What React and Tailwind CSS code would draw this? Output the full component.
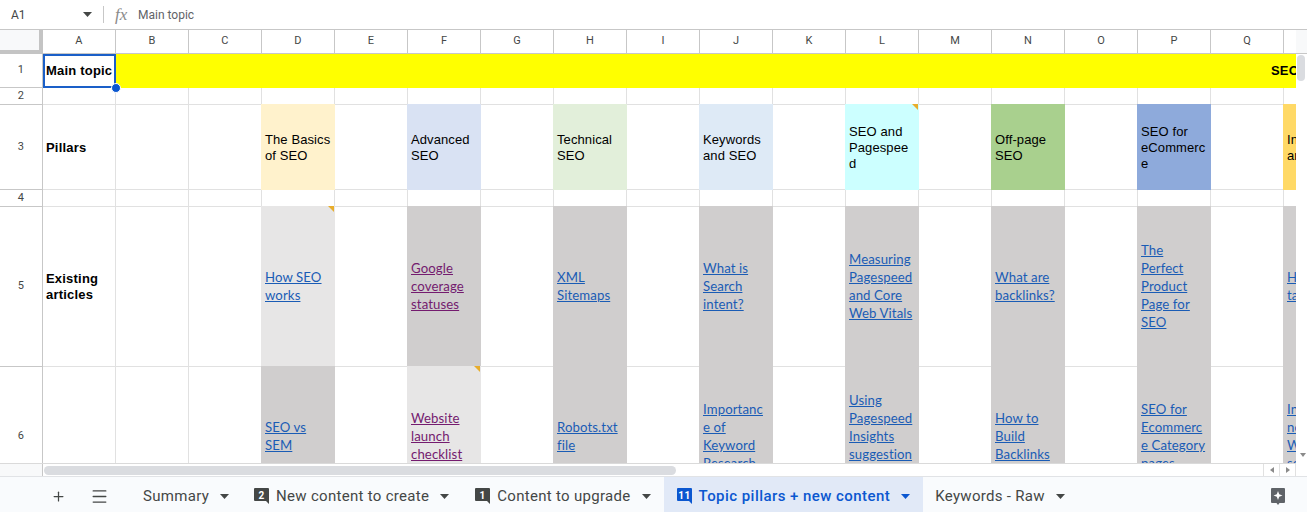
import React from "react";
import { Plus, Menu } from "lucide-react";

const COLS = ["A", "B", "C", "D", "E", "F", "G", "H", "I", "J", "K", "L", "M", "N", "O", "P", "Q", "R"];

const PILLARS = {
  D: { text: "The Basics of SEO", bg: "bg-[#fff2cc]" },
  F: { text: "Advanced SEO", bg: "bg-[#d9e2f3]" },
  H: { text: "Technical SEO", bg: "bg-[#e2efda]" },
  J: { text: "Keywords and SEO", bg: "bg-[#deeaf6]" },
  L: { text: "SEO and Pagespeed", bg: "bg-[#ccffff]", note: true },
  N: { text: "Off-page SEO", bg: "bg-[#a9d08e]" },
  P: { text: "SEO for eCommerce", bg: "bg-[#8eaadb]" },
  R: { text: "Internal and", bg: "bg-[#ffd966]" },
};

const ROW5 = {
  D: { text: "How SEO works", bg: "bg-[#e7e6e6]", note: true },
  F: { text: "Google coverage statuses", visited: true },
  H: { text: "XML Sitemaps" },
  J: { text: "What is Search intent?" },
  L: { text: "Measuring Pagespeed and Core Web Vitals" },
  N: { text: "What are backlinks?" },
  P: { text: "The Perfect Product Page for SEO" },
  R: { text: "How to target links" },
};

const ROW6 = {
  D: { text: "SEO vs SEM" },
  F: { text: "Website launch checklist", bg: "bg-[#e7e6e6]", note: true, visited: true },
  H: { text: "Robots.txt file" },
  J: { text: "Importance of Keyword Research" },
  L: { text: "Using Pagespeed Insights suggestions" },
  N: { text: "How to Build Backlinks" },
  P: { text: "SEO for Ecommerce Category pages" },
  R: { text: "Internal nofollow WordPress settings" },
};

function Note() {
  return <span className="absolute top-0 right-0 w-0 h-0 border-t-[6px] border-l-[6px] border-t-[#e8ad2c] border-l-transparent" />;
}

function Caret({ className }) {
  return (
    <svg width="9" height="5" viewBox="0 0 9 5" className={className}>
      <path d="M0 0h9L4.5 5z" fill="currentColor" />
    </svg>
  );
}

function RowLabel({ children }) {
  return <div className="flex items-center justify-center border-r border-b border-[#c7c7c7] font-['Roboto',sans-serif] text-[11px] text-[#444746]">{children}</div>;
}

function Badge({ n, blue }) {
  return (
    <svg width="15" height="16" viewBox="0 0 15 16" className="shrink-0">
      <path d="M0 1a1 1 0 0 1 1-1h13a1 1 0 0 1 1 1v15l-3-3H1a1 1 0 0 1-1-1z" fill={blue ? "#0b57d0" : "#444746"} />
      <text x="7.5" y="10.5" textAnchor="middle" fontSize="10" fontWeight="700" fill="#fff" fontFamily="Roboto, sans-serif">{n}</text>
    </svg>
  );
}

function Tab({ label, badge, active, className }) {
  return (
    <div className={`h-full pt-[3px] flex items-center ${active ? "bg-[#e1e9f7] text-[#0b57d0] font-medium tracking-[0.45px]" : "text-[#444746] tracking-[0.3px]"} ${className}`}>
      {badge && <Badge n={badge} blue={active} />}
      <span className={badge ? "ml-[7px]" : ""}>{label}</span>
      <Caret className="ml-[11px]" />
    </div>
  );
}

function LinkCell({ cell }) {
  if (!cell) return <div className="border-r border-b border-[#e1e1e1]" />;
  return (
    <div className={`relative -mt-px -ml-px flex items-center overflow-hidden pl-[4px] pr-[3px] pb-px border-r border-b border-transparent ${cell.bg || "bg-[#d0cece]"}`}>
      {cell.note && <Note />}
      <span className={`w-full break-words font-['Lato',sans-serif] text-[13.2px] leading-[18px] underline ${cell.visited ? "text-[#741b6f]" : "text-[#1a5cb5]"}`}>
        {cell.text}
      </span>
    </div>
  );
}

export default function App() {
  return (
    <div className="w-[1307px] h-[512px] overflow-hidden bg-white font-['Liberation_Sans',Arial,sans-serif] text-[13px] text-black">
      {/* formula bar */}
      <div className="h-[30px] flex items-center border-b border-[#c7c7c7] text-[#444746] font-['Roboto',sans-serif] text-[12px]">
        <div className="w-[103px] flex items-center justify-between pl-[11px] pr-[11px]">
          <span>A1</span>
          <Caret />
        </div>
        <div className="w-px h-[17px] bg-[#c7c7c7]" />
        <span className="ml-[11px] w-[18px] font-['Liberation_Serif',serif] italic text-[17px] leading-none text-[#8a8a8a]">fx</span>
        <span className="ml-[5px] text-[#5f6368]">Main topic</span>
      </div>

      {/* sheet */}
      <div className="flex h-[446px]">
        <div className="w-[1296px] flex flex-col">
          <div className="h-[433px] overflow-hidden tracking-[0.1px]">
            <div className="grid w-max grid-cols-[43px_repeat(18,73px)] grid-rows-[24px_34px_17px_85px_17px_160px_140px]">
              {/* column headers */}
              <div className="bg-[#f8f9fa] border-r-[4px] border-b-[4px] border-[#c4c4c4]" />
              {COLS.map((c) => (
                <div key={c} className="flex items-center justify-center border-r border-b border-[#c7c7c7] font-['Roboto',sans-serif] text-[11px] text-[#444746]">{c}</div>
              ))}

              {/* row 1 */}
              <RowLabel>1</RowLabel>
              <div className="relative flex items-center border-[2px] border-[#1a5fc8] font-bold tracking-[0.2px] whitespace-nowrap pl-px pb-px">
                Main topic
                <span className="absolute -right-[7px] -bottom-[7px] z-10 w-[10px] h-[10px] rounded-full bg-[#0b57d0] border border-white" />
              </div>
              <div className="col-span-17 bg-[#ffff00] flex items-center font-bold tracking-[0.2px] whitespace-nowrap pl-[1155px] pb-px">SEO</div>

              {/* row 2 */}
              <RowLabel>2</RowLabel>
              {COLS.map((c) => <div key={c} className="border-r border-b border-[#e1e1e1]" />)}

              {/* row 3 */}
              <RowLabel>3</RowLabel>
              {COLS.map((c) => {
                const p = PILLARS[c];
                if (c === "A") return <div key={c} className="flex items-center px-[3px] pt-[2px] font-bold tracking-[0.2px] border-r border-b border-[#e1e1e1]">Pillars</div>;
                if (!p) return <div key={c} className="border-r border-b border-[#e1e1e1]" />;
                return (
                  <div key={c} className={`relative -mt-px -ml-px flex items-center overflow-hidden pl-[4px] pr-[3px] pt-[3px] border-r border-b border-transparent ${p.bg}`}>
                    {p.note && <Note />}
                    <span className="w-full break-words leading-[16px]">{p.text}</span>
                  </div>
                );
              })}

              {/* row 4 */}
              <RowLabel>4</RowLabel>
              {COLS.map((c) => <div key={c} className="border-r border-b border-[#e1e1e1]" />)}

              {/* row 5 */}
              <RowLabel>5</RowLabel>
              {COLS.map((c) => c === "A"
                ? <div key={c} className="flex items-center px-[3px] font-bold tracking-[0.2px] leading-[16px] border-r border-b border-[#e1e1e1]">Existing articles</div>
                : <LinkCell key={c} cell={ROW5[c]} />)}

              {/* row 6 */}
              <RowLabel>6</RowLabel>
              {COLS.map((c) => <LinkCell key={c} cell={ROW6[c]} />)}
            </div>
          </div>

          {/* horizontal scrollbar */}
          <div className="h-[13px] flex border-t border-[#dadada] bg-white">
            <div className="w-[43px] border-r border-[#c7c7c7] bg-[#f8f9fa]" />
            <div className="flex-1 flex items-center pl-px">
              <div className="w-[632px] h-[9px] rounded-full bg-[#dadce0]" />
            </div>
            <div className="w-[33px] flex">
              <div className="w-[16px] flex items-center justify-center border-l border-[#e1e1e1]"><span className="border-y-[3px] border-r-[4px] border-y-transparent border-r-[#8a8a8a]" /></div>
              <div className="w-[17px] flex items-center justify-center border-x border-[#e1e1e1]"><span className="border-y-[3px] border-l-[4px] border-y-transparent border-l-[#8a8a8a]" /></div>
            </div>
          </div>
        </div>

        {/* vertical scrollbar */}
        <div className="w-[11px] relative bg-white">
          <div className="h-[24px] bg-[#f8f9fa] border-b border-[#c7c7c7]" />
          <div className="mt-px w-[8px] ml-[1px] h-[26px] rounded-full bg-[#dadce0]" />
          <span className="absolute right-[1px] top-[423px] border-x-[3px] border-t-[4px] border-x-transparent border-t-[#8a8a8a]" />
        </div>
      </div>

      {/* sheet tabs */}
      <div className="h-[36px] flex items-center bg-[#f9fbfd] border-t border-[#e1e3e6] text-[15px] font-['Roboto',sans-serif]">
        <Plus size={15} strokeWidth={2} className="ml-[51px] mt-[3px] text-[#444746]" />
        <Menu size={19} strokeWidth={1.6} className="ml-[24px] mt-[3px] text-[#444746]" />
        <Tab label="Summary" className="ml-[34px]" />
        <Tab label="New content to create" badge="2" className="ml-[25px]" />
        <Tab label="Content to upgrade" badge="1" className="ml-[26px]" />
        <Tab label="Topic pillars + new content" badge="11" active className="ml-[13px] pl-[13px] pr-[13px]" />
        <Tab label="Keywords - Raw" className="ml-[12px]" />
        <svg width="14" height="17" viewBox="0 0 14 17" className="ml-auto mr-[22px] mt-[3px]">
          <path d="M1 0h12a1 1 0 0 1 1 1v13a1 1 0 0 1-1 1H8.500L7 17l-1.500-2H1a1 1 0 0 1-1-1V1a1 1 0 0 1 1-1z" fill="#5f6368" />
          <path d="M7 3l1.200 3.300L11.500 7.500 8.200 8.700 7 12 5.800 8.700 2.500 7.500 5.800 6.300z" fill="#fff" />
        </svg>
      </div>
    </div>
  );
}
